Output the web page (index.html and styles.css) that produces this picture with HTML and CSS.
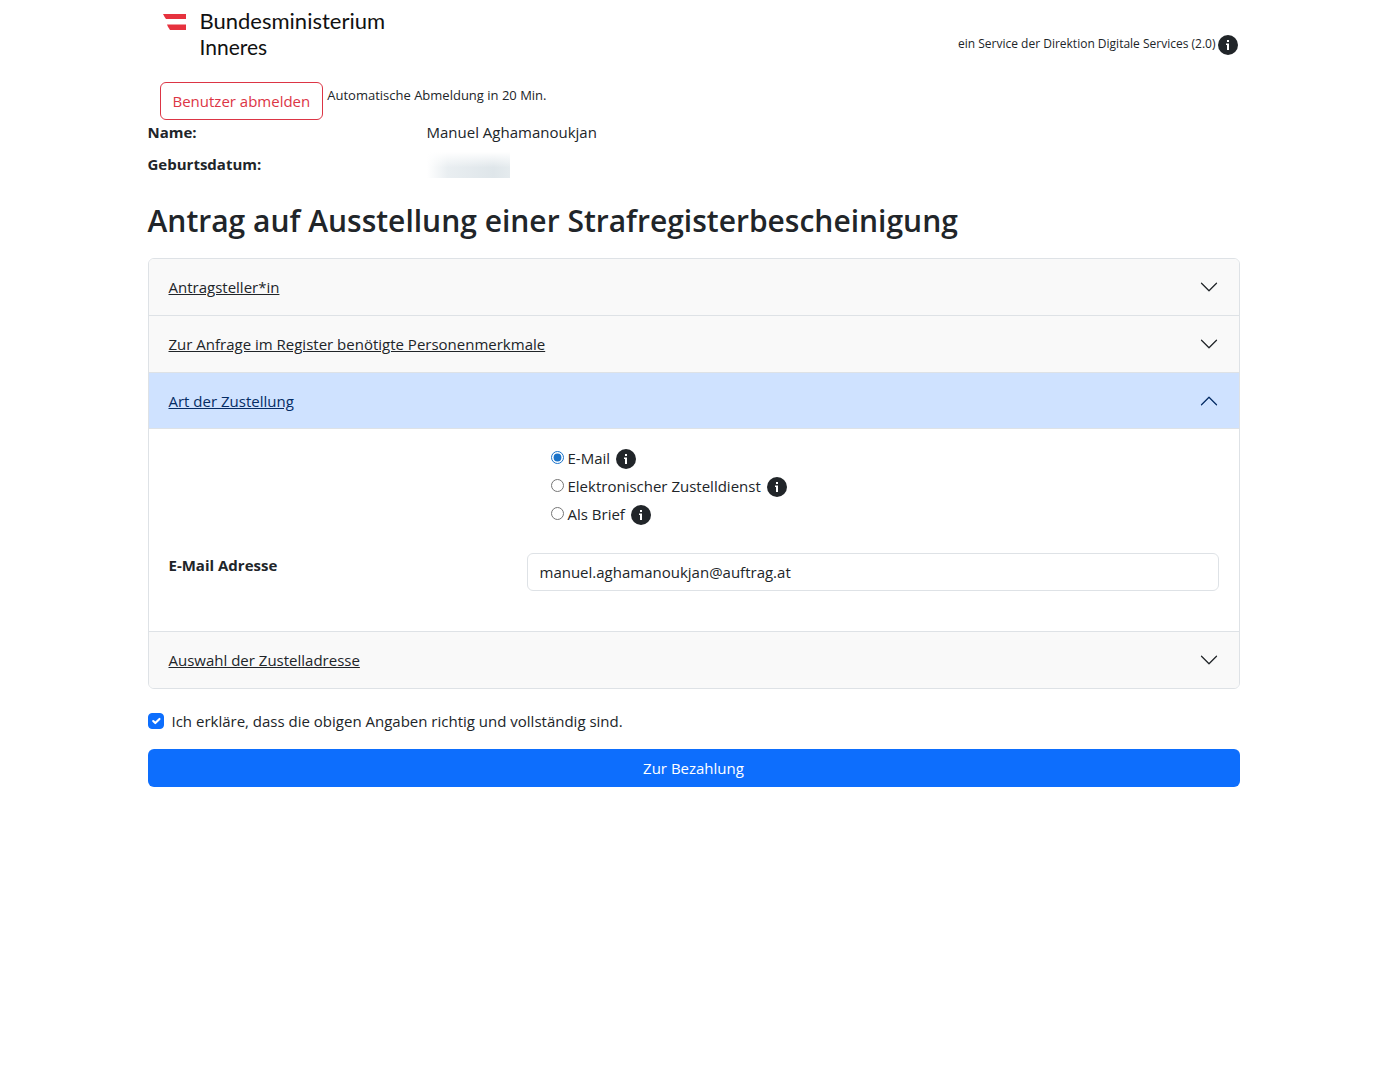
FILE: index.html
```html
<!DOCTYPE html>
<html lang="de">
<head>
  <meta charset="UTF-8">
  <meta name="viewport" content="width=device-width, initial-scale=1">
  <title>Antrag auf Ausstellung einer Strafregisterbescheinigung</title>
  <link rel="stylesheet" href="styles.css">
</head>
<body>
  <!-- shared icons -->
  <svg class="sprite" aria-hidden="true">
    <symbol id="info" viewBox="0 0 20 20">
      <circle cx="10" cy="10" r="10" fill="currentColor"/>
      <path d="M9 5h2v2H9zM8 8.500h3V15H9v-5H8z" fill="#fff"/>
    </symbol>
    <symbol id="chevron" viewBox="0 0 16 16">
      <path d="M2 5l6 6 6-6" fill="none" stroke="currentColor" stroke-linecap="round" stroke-linejoin="round"/>
    </symbol>
  </svg>

  <div class="container">
    <header class="header">
      <a class="logo" href="#">
        <svg class="flag" viewBox="0 0 23 16" aria-hidden="true">
          <path d="M0 0h23v5H3Q1.500 3 0 0z" fill="#e6323e"/>
          <path d="M4 10.500h19V16H7Q5 13.500 4 10.500z" fill="#e6323e"/>
        </svg>
        <span class="logo-text">
          <span class="logo-main">Bundesministerium</span>
          <span class="logo-sub">Inneres</span>
        </span>
      </a>
      <div class="service">
        <span>ein Service der Direktion Digitale Services (2.0)</span>
        <button type="button" class="info-btn" aria-label="Info zum Service"><svg><use href="#info"/></svg></button>
      </div>
    </header>

    <div class="session">
      <button type="button" class="btn btn-logout">Benutzer abmelden</button>
      <span class="timeout">Automatische Abmeldung in 20 Min.</span>
    </div>

    <dl class="person">
      <dt>Name:</dt>
      <dd>Manuel Aghamanoukjan</dd>
      <dt>Geburtsdatum:</dt>
      <dd><span class="redacted"></span></dd>
    </dl>

    <h1>Antrag auf Ausstellung einer Strafregisterbescheinigung</h1>

    <form>
      <div class="accordion">
        <h2><button type="button" class="accordion-btn" aria-expanded="false"><span>Antragsteller*in</span><svg><use href="#chevron"/></svg></button></h2>
        <h2><button type="button" class="accordion-btn" aria-expanded="false"><span>Zur Anfrage im Register benötigte Personenmerkmale</span><svg><use href="#chevron"/></svg></button></h2>
        <h2><button type="button" class="accordion-btn active" aria-expanded="true"><span>Art der Zustellung</span><svg><use href="#chevron"/></svg></button></h2>
        <div class="accordion-body">
          <div class="options">
            <div class="option">
              <input type="radio" name="zustellung" id="z-email" checked>
              <label for="z-email">E-Mail</label>
              <button type="button" class="info-btn" aria-label="Info zu E-Mail"><svg><use href="#info"/></svg></button>
            </div>
            <div class="option">
              <input type="radio" name="zustellung" id="z-dienst">
              <label for="z-dienst">Elektronischer Zustelldienst</label>
              <button type="button" class="info-btn" aria-label="Info zum Zustelldienst"><svg><use href="#info"/></svg></button>
            </div>
            <div class="option">
              <input type="radio" name="zustellung" id="z-brief">
              <label for="z-brief">Als Brief</label>
              <button type="button" class="info-btn" aria-label="Info zum Brief"><svg><use href="#info"/></svg></button>
            </div>
          </div>
          <label class="field-label" for="email">E-Mail Adresse</label>
          <input class="field" type="email" id="email" value="manuel.aghamanoukjan@auftrag.at">
        </div>
        <h2><button type="button" class="accordion-btn" aria-expanded="false"><span>Auswahl der Zustelladresse</span><svg><use href="#chevron"/></svg></button></h2>
      </div>

      <div class="confirm">
        <input type="checkbox" id="confirm" checked>
        <label for="confirm">Ich erkläre, dass die obigen Angaben richtig und vollständig sind.</label>
      </div>
      <button type="submit" class="btn btn-primary">Zur Bezahlung</button>
    </form>
  </div>
</body>
</html>
```
FILE: styles.css
```css
* {
  box-sizing: border-box;
}
body {
  margin: 0;
  background-color: #fff;
  color: #212529;
  font-family: "Open Sans", "Noto Sans", sans-serif;
  font-size: 15px;
  line-height: 24px;
}
button, input {
  font: inherit;
  color: inherit;
}
button {
  cursor: pointer;
}
.sprite {
  display: none;
}
.container {
  max-width: 1140px;
  margin: 0 auto;
  padding: 0 24px;
}

/* header */
.header {
  display: flex;
  justify-content: space-between;
  align-items: flex-start;
  padding: 8px 0 20px 15px;
}
.logo {
  display: flex;
  gap: 14px;
  color: #111;
  font-family: Lato, sans-serif;
  font-size: 22px;
  line-height: 26px;
  text-decoration: none;
}
.flag {
  width: 23px;
  height: 16px;
  margin-top: 6px;
}
.logo-text {
  display: flex;
  flex-direction: column;
}
.logo-sub {
  font-size: 21px;
}
.service {
  display: flex;
  align-items: center;
  gap: 2px;
  padding: 24px 2px 0 0;
  font-size: 12px;
}
.service span {
  padding-bottom: 2px;
}
.info-btn {
  width: 20px;
  height: 20px;
  padding: 0;
  border: 0;
  background: none;
}
.info-btn svg {
  display: block;
  width: 20px;
  height: 20px;
}
.session {
  display: flex;
  gap: 4px;
  margin-top: 2px;
  padding-left: 12px;
}
.timeout {
  padding-top: 1px;
  font-size: 13px;
}
.btn {
  padding: 6px 12px;
  border: 1px solid transparent;
  border-radius: 6px;
}
.btn-logout {
  background-color: #fff;
  border-color: #dc3545;
  color: #dc3545;
}

/* person data */
.person {
  display: grid;
  grid-template-columns: repeat(12, 1fr);
  gap: 8px 24px;
  margin: 0 0 24px;
}
.person dt {
  grid-column: span 3;
  font-weight: bold;
}
.person dd {
  grid-column: span 9;
  margin: 0;
}
.redacted {
  display: block;
  width: 83px;
  height: 26px;
  background: linear-gradient(to bottom, #fff, transparent 60%), linear-gradient(to right, #fff, #e9eef1 25%, #dfe6ea 80%, #e5ebee);
}

h1 {
  margin: 0 0 18px;
  font-size: 30px;
  font-weight: 600;
  line-height: 38px;
}

/* accordion */
.accordion {
  border: 1px solid #dee2e6;
  border-radius: 6px;
  overflow: hidden;
}
.accordion h2 {
  margin: 0;
  font-size: 15px;
  font-weight: normal;
}
.accordion h2 + h2,
.accordion-body + h2 {
  border-top: 1px solid #dee2e6;
}
.accordion-btn {
  display: flex;
  justify-content: space-between;
  align-items: center;
  width: 100%;
  padding: 16px 20px;
  border: 0;
  background-color: #f9f9f9;
  text-align: left;
}
.accordion-btn span {
  text-decoration: underline;
}
.accordion-btn svg {
  width: 20px;
  height: 20px;
}
.accordion-btn.active {
  background-color: #cfe2ff;
  box-shadow: inset 0 -1px 0 #dee2e6;
  color: #052c65;
}
.accordion-btn.active svg {
  transform: rotate(180deg);
}
.accordion-body {
  display: grid;
  grid-template-columns: repeat(12, 1fr);
  gap: 24px;
  padding: 16px 20px 40px;
}
.options {
  grid-column: 5 / -1;
  padding-left: 24px;
}
.option {
  display: flex;
  align-items: center;
  height: 28px;
}
.option input {
  width: 13px;
  height: 13px;
  margin: 0 4px 4px 0;
  accent-color: #1a73c9;
}
.option label {
  margin: 0 6px 2px 0;
}
.field-label {
  grid-column: span 4;
  font-weight: bold;
}
.field {
  grid-column: span 8;
  min-width: 0;
  height: 38px;
  padding: 6px 12px;
  border: 1px solid #dee2e6;
  border-radius: 6px;
  background-color: #fff;
}

/* confirmation */
.confirm {
  display: flex;
  align-items: center;
  gap: 8px;
  margin: 20px 0 16px;
}
.confirm input {
  appearance: none;
  width: 16px;
  height: 16px;
  margin: 0;
  border: 1px solid #0d6efd;
  border-radius: 4px;
}
.confirm input:checked {
  background: #0d6efd url("data:image/svg+xml,%3Csvg xmlns='http://www.w3.org/2000/svg' viewBox='0 0 20 20'%3E%3Cpath fill='none' stroke='%23fff' stroke-linecap='round' stroke-linejoin='round' stroke-width='3' d='m6 10 3 3 6-6'/%3E%3C/svg%3E") center / 14px 14px no-repeat;
}
.btn-primary {
  display: block;
  width: 100%;
  background-color: #0d6efd;
  color: #fff;
}
```
